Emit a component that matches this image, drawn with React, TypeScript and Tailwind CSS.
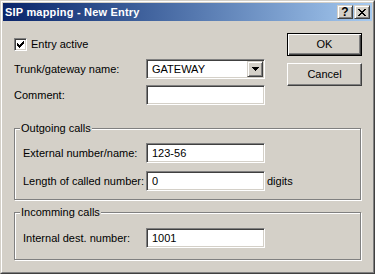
import React from 'react';

const sunken =
  'border border-t-[#808080] border-l-[#808080] border-b-white border-r-white shadow-[inset_1px_1px_0_#404040,inset_-1px_-1px_0_#d4d0c8]';

const raisedSmall =
  'border border-t-[#d4d0c8] border-l-[#d4d0c8] border-b-[#404040] border-r-[#404040] shadow-[inset_1px_1px_0_#fff,inset_-1px_-1px_0_#808080]';

const etched =
  'relative border border-[#808080] shadow-[1px_1px_0_#fff,inset_1px_1px_0_#fff]';

const TextField = ({ value = '' }: { value?: string }) => (
  <input
    readOnly
    value={value}
    className={`h-[20px] w-[119px] bg-white pl-[5px] text-[11px] text-black outline-none ${sunken}`}
  />
);

const Row = ({ label, width, children }: { label: string; width: string; children: React.ReactNode }) => (
  <div className="flex h-[20px] items-center">
    <span className={width}>{label}</span>
    {children}
  </div>
);

const GroupBox = ({ title, className, children }: { title: string; className: string; children: React.ReactNode }) => (
  <div className={`${etched} ${className}`}>
    <span className="absolute -top-[7px] left-[5px] bg-[#d4d0c8] px-[1px] leading-[13px]">{title}</span>
    {children}
  </div>
);

export default function App() {
  return (
    <div className="h-[274px] w-[375px] border border-t-[#d4d0c8] border-l-[#d4d0c8] border-b-[#404040] border-r-[#404040] bg-[#d4d0c8] font-['Liberation_Sans',Arial,sans-serif] text-[11px] text-black">
      <div className="h-full border border-t-white border-l-white border-b-[#808080] border-r-[#808080] p-[1px]">
        {/* caption */}
        <div className="flex h-[18px] items-center bg-gradient-to-r from-[#0a246a] to-[#a6caf0] pl-[2px] pr-[2px]">
          <span className="flex-1 pt-[1px] text-[11px] font-bold tracking-[0.2px] text-white">SIP mapping - New Entry</span>
          <div className="flex gap-[1px]">
            <div className={`flex h-[14px] w-[16px] items-center justify-center bg-[#d4d0c8] ${raisedSmall}`}>
              <span className="text-[12px] font-bold leading-[12px]">?</span>
            </div>
            <div className={`flex h-[14px] w-[16px] items-center justify-center bg-[#d4d0c8] ${raisedSmall}`}>
              <svg width="8" height="7" viewBox="0 0 8 7">
                <path
                  fill="#000"
                  d="M0 0h2v1H0zM6 0h2v1H6zM1 1h2v1H1zM5 1h2v1H5zM2 2h4v1H2zM3 3h2v1H3zM2 4h4v1H2zM1 5h2v1H1zM5 5h2v1H5zM0 6h2v1H0zM6 6h2v1H6z"
                />
              </svg>
            </div>
          </div>
        </div>

        {/* client */}
        <div className="px-[11px]">
          <div className="flex">
            <div className="flex flex-1 flex-col pt-[17px]">
              <label className="flex h-[13px] items-center gap-[4px]">
                <span className={`flex h-[13px] w-[13px] items-center justify-center bg-white ${sunken}`}>
                  <svg width="7" height="7" viewBox="0 0 7 7">
                    <path fill="#000" d="M0 2h1v3H0zM1 3h1v3H1zM2 4h1v3H2zM3 3h1v3H3zM4 2h1v3H4zM5 1h1v3H5zM6 0h1v3H6z" />
                  </svg>
                </span>
                Entry active
              </label>
              <div className="mt-[8px]">
                <Row label="Trunk/gateway name:" width="w-[132px]">
                  <div className={`flex h-[20px] w-[119px] bg-white ${sunken}`}>
                    <span className="flex-1 pl-[5px] leading-[18px]">GATEWAY</span>
                    <div className={`m-[1px] flex w-[16px] items-center justify-center bg-[#d4d0c8] ${raisedSmall}`}>
                      <svg width="7" height="4" viewBox="0 0 7 4">
                        <path fill="#000" d="M0 0h7v1H0zM1 1h5v1H1zM2 2h3v1H2zM3 3h1v1H3z" />
                      </svg>
                    </div>
                  </div>
                </Row>
              </div>
              <div className="mt-[6px]">
                <Row label="Comment:" width="w-[132px]">
                  <TextField />
                </Row>
              </div>
            </div>

            <div className="-mr-[1px] flex w-[75px] flex-col pt-[12px]">
              <button className="h-[23px] border border-black shadow-[inset_1px_1px_0_#fff,inset_-1px_-1px_0_#404040,inset_-2px_-2px_0_#808080]">
                OK
              </button>
              <button className="mt-[7px] h-[23px] border border-t-white border-l-white border-b-[#404040] border-r-[#404040] shadow-[inset_-1px_-1px_0_#808080]">
                Cancel
              </button>
            </div>
          </div>

          <GroupBox title="Outgoing calls" className="mt-[23px] w-[347px] pb-[8px] pl-[8px] pt-[14px]">
            <Row label="External number/name:" width="w-[123px]">
              <TextField value="123-56" />
            </Row>
            <div className="mt-[8px]">
              <Row label="Length of called number:" width="w-[123px]">
                <TextField value="0" />
                <span className="ml-[2px]">digits</span>
              </Row>
            </div>
          </GroupBox>

          <GroupBox title="Incomming calls" className="mt-[12px] w-[347px] pb-[11px] pl-[8px] pt-[15px]">
            <Row label="Internal dest. number:" width="w-[123px]">
              <TextField value="1001" />
            </Row>
          </GroupBox>
        </div>
      </div>
    </div>
  );
}
